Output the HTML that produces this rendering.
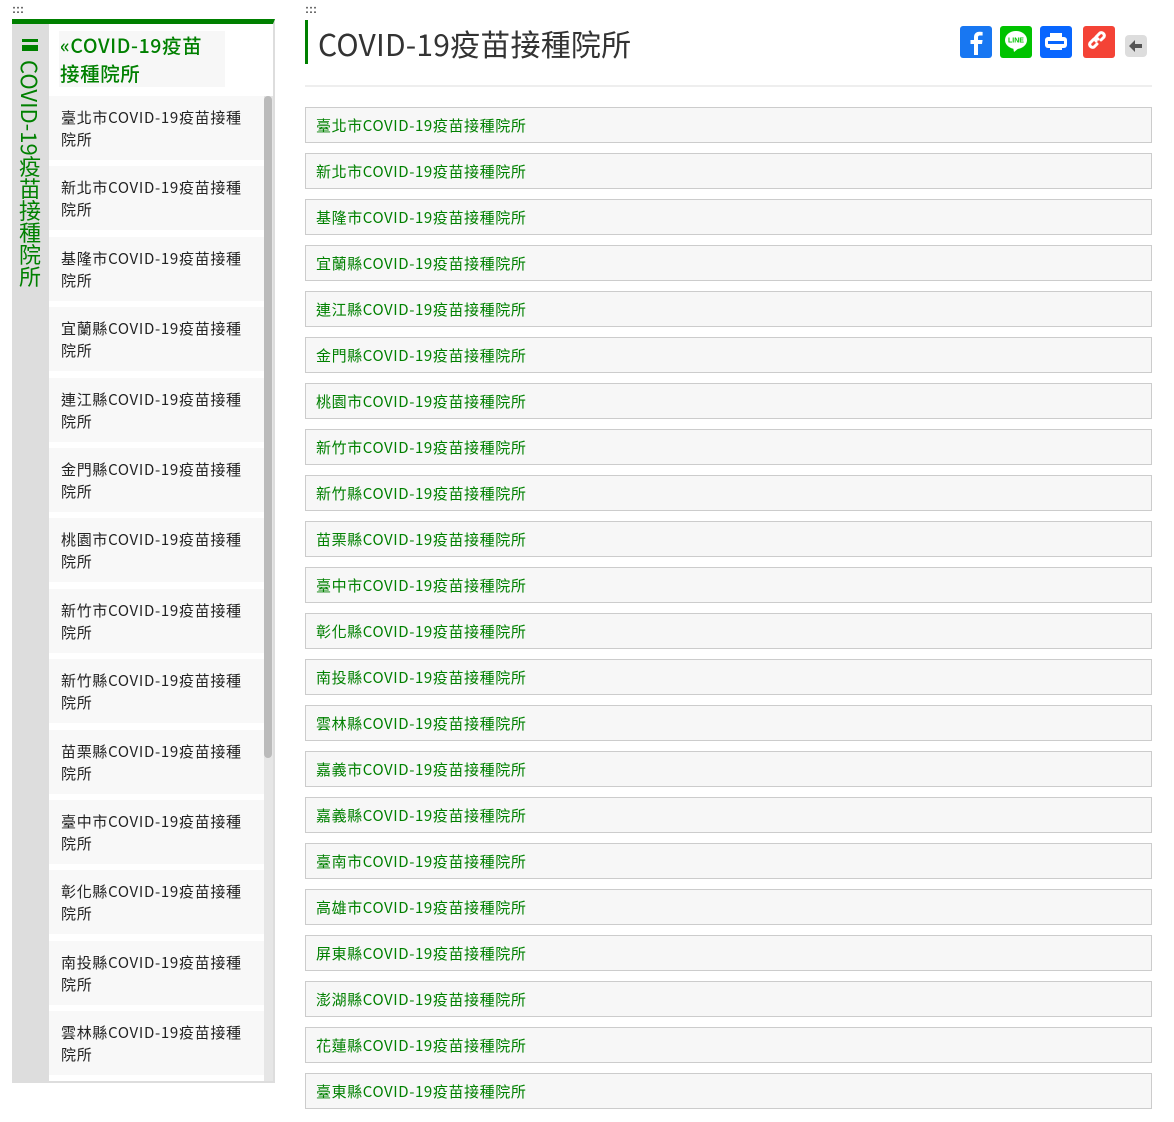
<!DOCTYPE html>
<html><head><meta charset="utf-8"><style>
*{margin:0;padding:0;box-sizing:border-box}
body{width:1174px;height:1122px;background:#fff;font-family:"Liberation Sans","Noto Sans CJK TC",sans-serif;position:relative;overflow:hidden}
.a{position:absolute}
.dots{font-size:12px;color:#555;line-height:10px;font-weight:bold}
#side{left:12px;top:19px;width:263px;height:1064px;border-top:5px solid #008000;border-right:2px solid #ddd;border-bottom:2px solid #ddd;background:#fff;overflow:hidden}
#strip{left:0;top:0;width:37px;height:100%;background:#ddd}
#ham{left:10px;top:15px;width:16px;height:12px;border-top:3px solid #008000;border-bottom:3px solid #008000}
#ham:after{content:"";position:absolute;left:0;top:2.5px;width:16px;height:3px;background:#008000}
#vt{left:5px;top:36px;writing-mode:vertical-rl;font-size:22px;color:#008000;line-height:26px;font-family:"Noto Sans CJK TC",sans-serif}
#stitle{left:47px;top:7px;width:166px;height:56px;background:#f7f7f7;color:#008000;font-size:19.5px;line-height:28px;font-weight:500;padding-left:1px;letter-spacing:0.6px;font-family:"Noto Sans CJK TC",sans-serif}
.si{position:absolute;left:37px;width:215px;height:64px;background:#f8f8f8;color:#222;font-size:15px;line-height:22px;padding:11px 0 0 12px;letter-spacing:0.7px;font-family:"Noto Sans CJK TC",sans-serif}
#sb{left:252px;top:72px;width:9px;height:990px;background:#e6e6e6}
#thumb{left:252px;top:72px;width:8px;height:662px;background:#bbb;border-radius:4px}
#title{left:305px;top:20px;height:44px;border-left:3px solid #008000;padding-left:10px;font-size:30px;line-height:46px;color:#333;letter-spacing:0.2px;font-family:"Noto Sans CJK TC",sans-serif}
#hr{left:305px;top:85px;width:847px;height:2px;background:#eee}
.li{position:absolute;left:305px;width:847px;height:36px;border:1px solid #ccc;background:#f7f7f7;color:#008000;font-size:15px;line-height:36px;padding-left:10px;letter-spacing:0.6px;font-family:"Noto Sans CJK TC",sans-serif}
.ic{position:absolute;top:26px;width:32px;height:32px;border-radius:3px}
</style></head><body>
<div class="a dots" style="left:12px;top:4px">:::</div>
<div class="a dots" style="left:305px;top:4px">:::</div>
<div id="side" class="a">
<div id="strip" class="a"></div>
<div id="ham" class="a"></div>
<div id="vt" class="a">COVID-19疫苗接種院所</div>
<div id="stitle" class="a">«COVID-19疫苗<br>接種院所</div>
<div id="sb" class="a"></div><div id="thumb" class="a"></div>
<div class="si" style="top:72px">臺北市COVID-19疫苗接種<br>院所</div>
<div class="si" style="top:142px">新北市COVID-19疫苗接種<br>院所</div>
<div class="si" style="top:213px">基隆市COVID-19疫苗接種<br>院所</div>
<div class="si" style="top:283px">宜蘭縣COVID-19疫苗接種<br>院所</div>
<div class="si" style="top:354px">連江縣COVID-19疫苗接種<br>院所</div>
<div class="si" style="top:424px">金門縣COVID-19疫苗接種<br>院所</div>
<div class="si" style="top:494px">桃園市COVID-19疫苗接種<br>院所</div>
<div class="si" style="top:565px">新竹市COVID-19疫苗接種<br>院所</div>
<div class="si" style="top:635px">新竹縣COVID-19疫苗接種<br>院所</div>
<div class="si" style="top:706px">苗栗縣COVID-19疫苗接種<br>院所</div>
<div class="si" style="top:776px">臺中市COVID-19疫苗接種<br>院所</div>
<div class="si" style="top:846px">彰化縣COVID-19疫苗接種<br>院所</div>
<div class="si" style="top:917px">南投縣COVID-19疫苗接種<br>院所</div>
<div class="si" style="top:987px">雲林縣COVID-19疫苗接種<br>院所</div>
<div class="si" style="top:1057px">嘉義市COVID-19疫苗接種<br>院所</div>
</div>
<div id="title" class="a">COVID-19疫苗接種院所</div>
<div class="ic" style="left:960px;background:#1877f2"><svg width="32" height="32"><path d="M18 29V18h4l.6-4H18v-2.5c0-1.2.4-2 2-2h2.6V6c-.5 0-1.8-.2-3.3-.2-3.2 0-5.3 2-5.3 5.5V14h-3.5v4H14v11z" fill="#fff"/></svg></div>
<div class="ic" style="left:1000px;background:#00c300"><svg width="32" height="32"><ellipse cx="16" cy="14" rx="11" ry="9" fill="#fff"/><path d="M13 21l1 5 5-4z" fill="#fff"/><text x="16" y="16.5" font-size="7" font-weight="bold" fill="#00c300" text-anchor="middle" font-family="Liberation Sans">LINE</text></svg></div>
<div class="ic" style="left:1040px;background:#0866ff"><svg width="32" height="32"><rect x="10" y="7" width="12" height="6" fill="#fff"/><rect x="5" y="11" width="22" height="11" rx="3" fill="#fff"/><rect x="8" y="15" width="16" height="3" fill="#0866ff"/><rect x="10" y="18" width="12" height="6" fill="#fff"/></svg></div>
<div class="ic" style="left:1083px;background:#f44336"><svg width="32" height="32" fill="none" stroke="#fff" stroke-width="3" stroke-linecap="round"><path d="M14 18l-3 3a3 3 0 0 1-4-4l4-4a3 3 0 0 1 4 0"/><path d="M18 14l3-3a3 3 0 0 0-4-4l-4 4a3 3 0 0 0 0 4"/></svg></div>
<div class="a" style="left:1125px;top:35px;width:22px;height:22px;border-radius:4px;background:#ddd"><svg width="22" height="22"><path d="M4 11l6-6v4h7v4h-7v4z" fill="#555"/></svg></div>
<div id="hr" class="a"></div>
<div class="li" style="top:107px">臺北市COVID-19疫苗接種院所</div>
<div class="li" style="top:153px">新北市COVID-19疫苗接種院所</div>
<div class="li" style="top:199px">基隆市COVID-19疫苗接種院所</div>
<div class="li" style="top:245px">宜蘭縣COVID-19疫苗接種院所</div>
<div class="li" style="top:291px">連江縣COVID-19疫苗接種院所</div>
<div class="li" style="top:337px">金門縣COVID-19疫苗接種院所</div>
<div class="li" style="top:383px">桃園市COVID-19疫苗接種院所</div>
<div class="li" style="top:429px">新竹市COVID-19疫苗接種院所</div>
<div class="li" style="top:475px">新竹縣COVID-19疫苗接種院所</div>
<div class="li" style="top:521px">苗栗縣COVID-19疫苗接種院所</div>
<div class="li" style="top:567px">臺中市COVID-19疫苗接種院所</div>
<div class="li" style="top:613px">彰化縣COVID-19疫苗接種院所</div>
<div class="li" style="top:659px">南投縣COVID-19疫苗接種院所</div>
<div class="li" style="top:705px">雲林縣COVID-19疫苗接種院所</div>
<div class="li" style="top:751px">嘉義市COVID-19疫苗接種院所</div>
<div class="li" style="top:797px">嘉義縣COVID-19疫苗接種院所</div>
<div class="li" style="top:843px">臺南市COVID-19疫苗接種院所</div>
<div class="li" style="top:889px">高雄市COVID-19疫苗接種院所</div>
<div class="li" style="top:935px">屏東縣COVID-19疫苗接種院所</div>
<div class="li" style="top:981px">澎湖縣COVID-19疫苗接種院所</div>
<div class="li" style="top:1027px">花蓮縣COVID-19疫苗接種院所</div>
<div class="li" style="top:1073px">臺東縣COVID-19疫苗接種院所</div>
</body></html>
